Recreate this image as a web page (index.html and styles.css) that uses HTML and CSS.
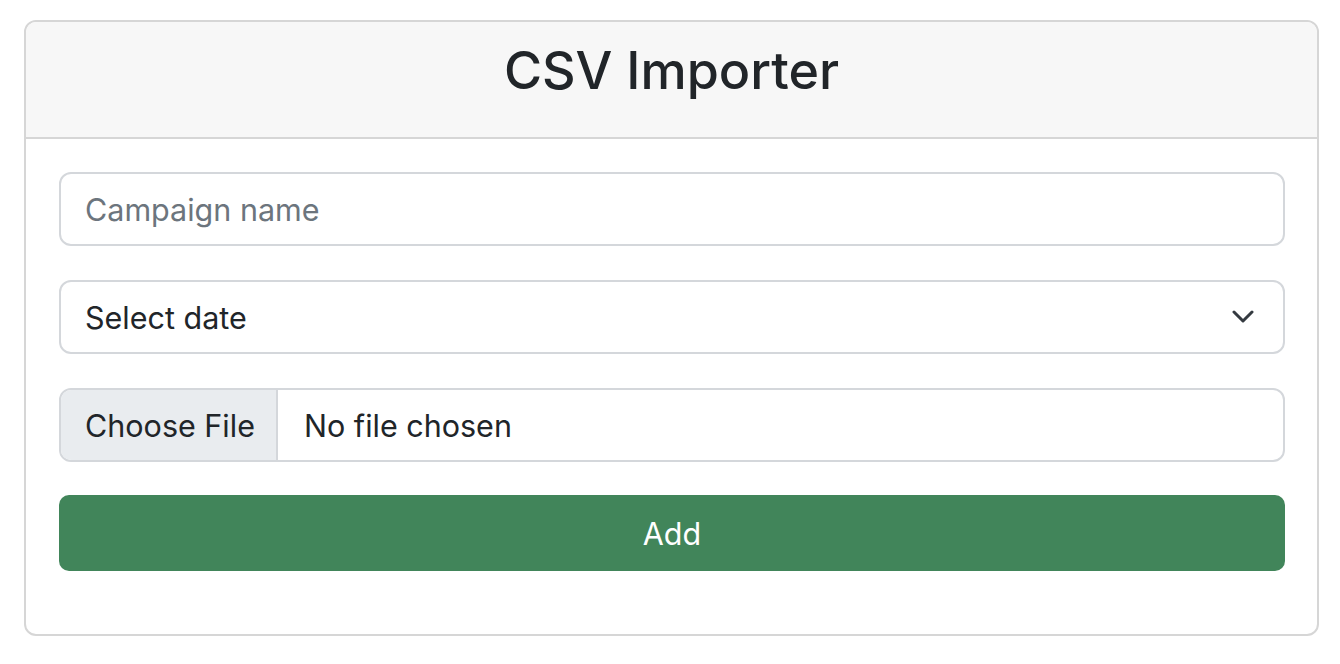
FILE: index.html
```html
<!DOCTYPE html>
<html lang="en">
<head>
<meta charset="utf-8">
<title>CSV Importer</title>
<link rel="stylesheet" href="styles.css">
</head>
<body>
<div class="card">
  <div class="card-header">
    <h1 class="title">CSV Importer</h1>
  </div>
  <form class="card-body">
    <input class="control" type="text" placeholder="Campaign name">
    <div class="select-wrap">
      <select class="control select">
        <option>Select date</option>
      </select>
      <svg class="chevron" width="22" height="13" viewBox="0 0 22 13" aria-hidden="true">
        <path d="M2 2 L11 11 L20 2" fill="none" stroke="#343a40" stroke-width="3" stroke-linecap="round" stroke-linejoin="round"/>
      </svg>
    </div>
    <input class="control file" type="file">
    <button class="btn" type="button">Add</button>
  </form>
</div>
</body>
</html>
```
FILE: styles.css
```css
* { box-sizing: border-box; }
body {
  margin: 0;
  padding: 20px 21px 0 24px;
  background: #fff;
  font-family: Inter, "Noto Sans", "Liberation Sans", sans-serif;
  color: #212529;
}
.card {
  border: 2px solid #d6d6d6;
  border-radius: 12px;
  overflow: hidden;
  background: #fff;
}
.card-header {
  height: 117px;
  padding-bottom: 17px;
  background: #f7f7f7;
  border-bottom: 2px solid #d6d6d6;
  display: flex;
  align-items: center;
  justify-content: center;
}
.title {
  margin: 0;
  font-size: 52px;
  font-weight: 500;
  line-height: 1.2;
}
.card-body {
  margin: 0;
  padding: 33px 32px 63px 33px;
  display: flex;
  flex-direction: column;
  gap: 34px;
}
.control {
  display: block;
  width: 100%;
  height: 74px;
  margin: 0;
  border: 2px solid #d4d7db;
  border-radius: 12px;
  padding: 0 24px;
  font-family: inherit;
  font-size: 30.5px;
  color: #212529;
  background: #fff;
  outline: none;
}
.control::placeholder { color: #6c757d; opacity: 1; }
.select-wrap { position: relative; }
.select {
  appearance: none;
  -webkit-appearance: none;
}
.chevron {
  position: absolute;
  right: 31px;
  top: 30px;
  pointer-events: none;
}
.file {
  padding: 0 24px 0 0;
  overflow: hidden;
  line-height: 70px;
}
.file::file-selector-button {
  height: 70px;
  margin: 0 26px 0 0;
  padding: 0 24px;
  border: none;
  border-right: 2px solid #d4d7db;
  border-radius: 0;
  background: #e9ecef;
  color: #212529;
  font-family: inherit;
  font-size: 30.5px;
  width: 217px;
  text-align: left;
}
.btn {
  display: block;
  width: 100%;
  height: 76px;
  margin-top: -1px;
  border: none;
  border-radius: 10px;
  background: #41855a;
  color: #fff;
  font-family: inherit;
  font-size: 30.5px;
}
```
